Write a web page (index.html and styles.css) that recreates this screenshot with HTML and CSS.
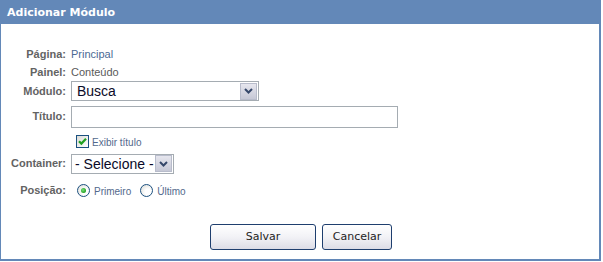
FILE: index.html
```html
<!DOCTYPE html>
<html lang="pt">
<head>
<meta charset="utf-8">
<title>Adicionar Módulo</title>
<link rel="stylesheet" href="styles.css">
</head>
<body>
<div class="panel">
  <div class="panel-head">Adicionar Módulo</div>
  <div class="panel-body">
    <div class="form">
      <div class="lbl">Página:</div>
      <div class="val val-link">Principal</div>

      <div class="lbl">Painel:</div>
      <div class="val">Conteúdo</div>

      <div class="lbl">Módulo:</div>
      <div class="ctl">
        <div class="select select-wide">
          <span class="select-text">Busca</span>
          <span class="select-btn"><svg width="9" height="6" viewBox="0 0 9 6"><path d="M1 1 L4.5 4.5 L8 1" fill="none" stroke="#35476a" stroke-width="2"/></svg></span>
        </div>
      </div>

      <div class="lbl">Título:</div>
      <div class="ctl"><div class="textbox"></div></div>

      <div class="lbl"></div>
      <div class="ctl">
        <label class="check">
          <span class="check-box"><svg width="11" height="11" viewBox="0 0 11 11"><path d="M2 5.2 L4.4 7.6 L9 2.8" fill="none" stroke="#21a121" stroke-width="2.2"/></svg></span>
          <span class="opt-text">Exibir título</span>
        </label>
      </div>

      <div class="lbl">Container:</div>
      <div class="ctl">
        <div class="select select-small">
          <span class="select-text">- Selecione -</span>
          <span class="select-btn"><svg width="9" height="6" viewBox="0 0 9 6"><path d="M1 1 L4.5 4.5 L8 1" fill="none" stroke="#35476a" stroke-width="2"/></svg></span>
        </div>
      </div>

      <div class="lbl">Posição:</div>
      <div class="ctl radios">
        <label class="radio"><span class="radio-dot on"></span><span class="opt-text">Primeiro</span></label>
        <label class="radio"><span class="radio-dot"></span><span class="opt-text">Último</span></label>
      </div>
    </div>
    <div class="actions">
      <button class="btn btn-save" type="button">Salvar</button>
      <button class="btn btn-cancel" type="button">Cancelar</button>
    </div>
  </div>
</div>
</body>
</html>
```
FILE: styles.css
```css
html, body {
  margin: 0;
  padding: 0;
  background: #ffffff;
}

body {
  font-family: "Liberation Sans", Arial, sans-serif;
  font-size: 11px;
}

.panel {
  width: 598px;
  height: 259px;
  border-left: 1px solid #6388b8;
  border-right: 2px solid #6388b8;
  border-bottom: 2px solid #6388b8;
  display: flex;
  flex-direction: column;
}

.panel-head {
  height: 24px;
  background: #6388b8;
  color: #ffffff;
  font-family: "DejaVu Sans", Verdana, sans-serif;
  font-weight: bold;
  font-size: 11px;
  line-height: 26px;
  padding-left: 7px;
  margin-right: -2px;
  margin-left: -1px;
}

.panel-body {
  padding-top: 21px;
}

.form {
  display: grid;
  grid-template-columns: 65px auto;
  grid-template-rows: 19px 17px 20px 31px 19px 25px 29px;
  column-gap: 5px;
  align-items: center;
}

.lbl {
  text-align: right;
  font-weight: bold;
  font-size: 11px;
  color: #636363;
  line-height: 13px;
}

.val {
  color: #5a5a5a;
  line-height: 13px;
}

.val-link {
  color: #4b6a95;
}

.ctl {
  display: flex;
  align-items: center;
}

.select {
  box-sizing: border-box;
  height: 20px;
  border: 1px solid #a5acb2;
  background: #ffffff;
  display: flex;
  align-items: center;
  justify-content: space-between;
  padding: 0 1px 0 5px;
}

.select-wide {
  width: 188px;
}

.select-small {
  width: 103px;
  padding-left: 3px;
}

.select-text {
  font-size: 14px;
  color: #0a0a28;
  line-height: 16px;
}

.select-btn {
  box-sizing: border-box;
  width: 17px;
  height: 17px;
  border: 1px solid #b8bccb;
  background: linear-gradient(#e6e6ee, #c6c8d6);
  display: flex;
  align-items: center;
  justify-content: center;
}

.textbox {
  box-sizing: border-box;
  width: 327px;
  height: 22px;
  border: 1px solid #a5acb2;
  background: #ffffff;
}

.check {
  display: flex;
  align-items: center;
  margin-left: 5px;
}

.check-box {
  box-sizing: border-box;
  width: 13px;
  height: 13px;
  border: 1px solid #1c5180;
  background: linear-gradient(135deg, #dcdcd7, #ffffff);
  display: flex;
  align-items: center;
  justify-content: center;
}

.opt-text {
  font-size: 10px;
  color: #53698c;
  line-height: 13px;
}

.check .opt-text {
  margin-left: 3px;
  margin-top: 2px;
}

.radios {
  gap: 9px;
}

.radio {
  display: flex;
  align-items: center;
}

.radio:first-child {
  margin-left: 6px;
}

.radio .opt-text {
  margin-left: 4px;
  margin-top: 2px;
}

.radio-dot {
  box-sizing: border-box;
  width: 13px;
  height: 13px;
  border-radius: 50%;
  border: 1px solid #1c5180;
  background: radial-gradient(circle at 65% 65%, #ffffff 30%, #d8d8d2 100%);
  display: flex;
  align-items: center;
  justify-content: center;
}

.radio-dot.on::after {
  content: "";
  width: 5px;
  height: 5px;
  border-radius: 50%;
  background: radial-gradient(circle at 40% 40%, #7be07b, #21a121 70%);
}

.actions {
  display: flex;
  justify-content: center;
  gap: 6px;
  margin-top: 19px;
  padding-left: 2px;
}

.btn {
  box-sizing: border-box;
  height: 26px;
  border: 1px solid #1e3e6e;
  border-radius: 3px;
  background: linear-gradient(#ffffff 0%, #f2f2f6 50%, #dcdce6 100%);
  font-family: "DejaVu Sans", Verdana, sans-serif;
  font-size: 11px;
  color: #1e1e1e;
  padding: 0;
  line-height: 24px;
}

.btn-save {
  width: 106px;
}

.btn-cancel {
  width: 70px;
}
```
